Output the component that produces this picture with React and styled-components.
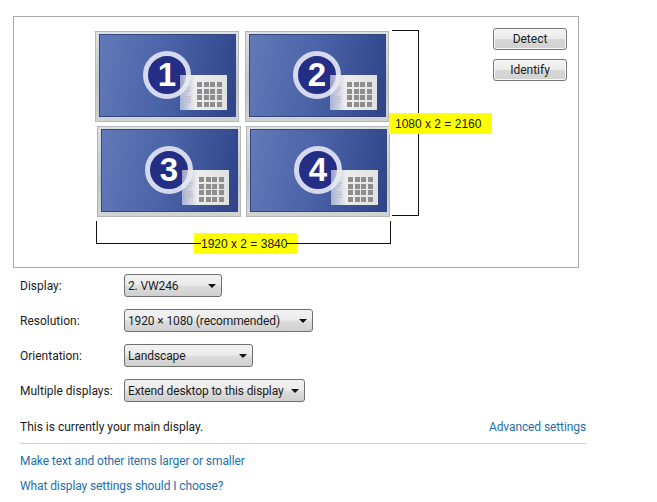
import styled, { createGlobalStyle } from "styled-components";

const GlobalStyle = createGlobalStyle`
  html, body {
    margin: 0;
    background: #fff;
    font-family: Roboto, "Noto Sans", sans-serif;
    font-size: 12px;
    color: #1c1c1c;
  }
`;

const Page = styled.div`
  width: 657px;
  height: 502px;
  padding: 16px 0 0 13px;
  box-sizing: border-box;
  overflow: hidden;
`;

const Panel = styled.div`
  position: relative;
  width: 566px;
  height: 252px;
  box-sizing: border-box;
  border: 1px solid #a9a9a9;
  display: flex;
  flex-direction: column;
  align-items: flex-end;
  gap: 9px;
  padding: 11px 11px 0 0;
`;

const Button = styled.div`
  width: 74px;
  height: 22px;
  box-sizing: border-box;
  border: 1px solid #777;
  border-radius: 3px;
  background: linear-gradient(#f4f4f4 0%, #ebebeb 48%, #d6d6d6 52%, #d2d2d2 100%);
  box-shadow: inset 0 0 0 1px #f8f8f8;
  display: flex;
  align-items: center;
  justify-content: center;
  font-size: 12px;
`;

const Monitor = styled.div`
  position: absolute;
  left: ${(p) => p.$x}px;
  top: ${(p) => p.$y}px;
  width: 144px;
  height: 91px;
  box-sizing: border-box;
  padding: 3px 3px 5px 4px;
  background: linear-gradient(#dfe2e5, #c3c6c8 60%, #d2d3d3);
  box-shadow: inset 0 0 0 1px #b4b7ba;
`;

const Screen = styled.div`
  height: 100%;
  background: linear-gradient(100deg, #627ab8 0%, #4c64a8 45%, #2f4488 100%);
  box-shadow: inset 0 0 0 1px #34477f;
`;

const Badge = styled.div`
  position: absolute;
  left: 48px;
  top: 20px;
  width: 48px;
  height: 48px;
  box-sizing: border-box;
  border-radius: 50%;
  border: 5px solid #d5d9ee;
  background: #252e85;
  color: #fff;
  display: flex;
  align-items: center;
  justify-content: center;
  font-family: "Liberation Sans", Arial, sans-serif;
  font-weight: 700;
  font-size: 33px;
`;

const Sheet = styled.div`
  position: absolute;
  left: 85px;
  top: 44px;
  width: 47px;
  height: 35px;
  box-sizing: border-box;
  padding: 7px 5px 0 17px;
  background: linear-gradient(90deg, rgba(232, 234, 242, 0.6) 0%, #eeeeee 32%, #e0e1e2 100%);
`;

const SheetLines = styled.svg`
  position: absolute;
  left: 4px;
  top: 11px;
`;

const Cells = styled.div`
  display: grid;
  grid-template-columns: repeat(4, 5px);
  grid-auto-rows: 5px;
  gap: 1.5px;
`;

const Cell = styled.span`
  background: #8e8e8e;
`;

const BracketRight = styled.div`
  position: absolute;
  left: 378px;
  top: 13px;
  width: 27px;
  height: 186px;
  box-sizing: border-box;
  border: 1px solid #111;
  border-left: 0;
`;

const BracketBottom = styled.div`
  position: absolute;
  z-index: 1;
  left: 82px;
  top: 204px;
  width: 295px;
  height: 23px;
  box-sizing: border-box;
  border: 1px solid #111;
  border-top: 0;
`;

const Tag = styled.div`
  position: absolute;
  left: ${(p) => p.$x}px;
  top: ${(p) => p.$y}px;
  width: 103px;
  height: 21px;
  box-sizing: border-box;
  padding-left: ${(p) => p.$inset}px;
  background: #ffff00;
  display: flex;
  align-items: center;
  font-family: "Liberation Sans", Arial, sans-serif;
  font-size: 12px;
  color: #151515;
`;

const TagText = styled.span`
  position: relative;
  z-index: 3;
  background: #ffff00;
`;

const Form = styled.div`
  width: 566px;
  margin-left: 7px;
`;

const Row = styled.div`
  height: 35px;
  display: flex;
  align-items: center;
`;

const Label = styled.div`
  width: 104px;
`;

const Select = styled.div`
  width: ${(p) => p.$w}px;
  height: 23px;
  box-sizing: border-box;
  border: 1px solid #707070;
  border-radius: 3px;
  padding: 0 5px 0 3px;
  background: linear-gradient(#f2f2f2 0%, #ebebeb 48%, #dddddd 52%, #cfcfcf 100%);
  display: flex;
  align-items: center;
  justify-content: space-between;
  white-space: nowrap;
  letter-spacing: -0.12px;
`;

const Caret = styled.span`
  width: 0;
  height: 0;
  border-left: 4px solid transparent;
  border-right: 4px solid transparent;
  border-top: 4px solid #111;
`;

const Note = styled.div`
  height: 36px;
  box-sizing: border-box;
  padding-top: 12px;
  border-bottom: 1px solid #d0d0d0;
  display: flex;
  justify-content: space-between;
  align-items: flex-start;
`;

const LinkText = styled.span`
  color: #1f6fa8;
  letter-spacing: -0.1px;
`;

const Links = styled.div`
  display: flex;
  flex-direction: column;
  gap: 8px;
  padding-top: 9px;
  line-height: 17px;
`;

const monitors = [
  { n: 1, x: 81, y: 14 },
  { n: 2, x: 231, y: 14 },
  { n: 3, x: 83, y: 109 },
  { n: 4, x: 232, y: 109 },
];

const selects = [
  { label: "Display:", value: "2. VW246", w: 98 },
  { label: "Resolution:", value: "1920 × 1080 (recommended)", w: 189 },
  { label: "Orientation:", value: "Landscape", w: 129 },
  { label: "Multiple displays:", value: "Extend desktop to this display", w: 181 },
];

const App = () => {
  return (
    <Page>
      <GlobalStyle />
      <Panel>
        <BracketRight />
        <BracketBottom />
        {monitors.map((m) => (
          <Monitor key={m.n} $x={m.x} $y={m.y}>
            <Screen />
            <Badge>{m.n}</Badge>
            <Sheet>
              <SheetLines width="8" height="18" viewBox="0 0 8 18">
                <path d="M3 2h4M1 5h5M1 11h6M1 13.5h6M1 16h6" stroke="#b6bac4" strokeWidth="1" fill="none" />
              </SheetLines>
              <Cells>
                {Array.from({ length: 16 }).map((_, i) => (
                  <Cell key={i} />
                ))}
              </Cells>
            </Sheet>
          </Monitor>
        ))}
        <Tag $x={375} $y={96} $inset={6}>1080 x 2 = 2160</Tag>
        <Tag $x={180} $y={216} $inset={7}>
          <TagText>1920 x 2 = 3840</TagText>
        </Tag>
        <Button>Detect</Button>
        <Button>Identify</Button>
      </Panel>
      <Form>
        {selects.map((s) => (
          <Row key={s.label}>
            <Label>{s.label}</Label>
            <Select $w={s.w}>
              {s.value}
              <Caret />
            </Select>
          </Row>
        ))}
        <Note>
          <span>This is currently your main display.</span>
          <LinkText>Advanced settings</LinkText>
        </Note>
        <Links>
          <LinkText>Make text and other items larger or smaller</LinkText>
          <LinkText>What display settings should I choose?</LinkText>
        </Links>
      </Form>
    </Page>
  );
};

export default App;
